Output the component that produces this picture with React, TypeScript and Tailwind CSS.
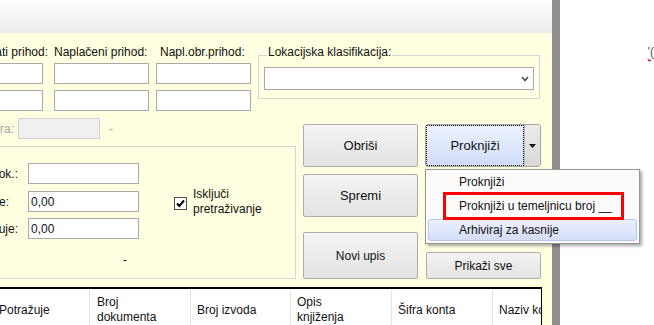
import React from "react"

const btn =
    "flex items-center justify-center border border-[#adadad] rounded-[2px] bg-[linear-gradient(#f4f4f4,#e3e3e3)] text-[#111]"
const box = "h-[21px] border border-[#a9a9a9] bg-white"

function Chevron() {
    return (
        <svg width="8" height="6" viewBox="0 0 8 6">
            <polyline points="1,1 4,4.5 7,1" fill="none" stroke="#4a4a4a" strokeWidth="1.6" />
        </svg>
    )
}

export default function App() {
    return (
        <div className="relative flex w-[654px] h-[325px] overflow-hidden bg-white font-['Liberation_Sans',Arial,sans-serif] text-[12px] text-[#111]">
            {/* form */}
            <div className="w-[552px] flex flex-col">
                <div className="h-[33px] shrink-0 bg-[linear-gradient(#fdfdfd,#ececec)]" />
                <div className="flex-1 min-h-0 overflow-hidden flex flex-col bg-[#ffffe1] pt-[12px]">
                    {/* top fields */}
                    <div className="flex items-start shrink-0">
                        <div className="w-[43px] flex flex-col">
                            <div className="w-[48px] h-[14px] leading-[14px] mb-[4px] flex justify-end whitespace-nowrap">
                                Obračunati prihod:
                            </div>
                            <div className={`${box} -ml-[10px]`} />
                            <div className={`${box} -ml-[10px] mt-[6px]`} />
                        </div>
                        <div className="w-[95px] ml-[11px] flex flex-col">
                            <div className="h-[14px] leading-[14px] mb-[4px] whitespace-nowrap">Naplačeni prihod:</div>
                            <div className={box} />
                            <div className={`${box} mt-[6px]`} />
                        </div>
                        <div className="w-[95px] ml-[7px] flex flex-col">
                            <div className="h-[14px] leading-[14px] mb-[4px] pl-[4px] whitespace-nowrap">Napl.obr.prihod:</div>
                            <div className={box} />
                            <div className={`${box} mt-[6px]`} />
                        </div>
                        <div className="relative w-[282px] ml-[7px] mt-[10px] border border-[#d6d6d6] px-[5px] pt-[11px] pb-[8px]">
                            <span className="absolute left-[8px] -top-[11px] h-[14px] leading-[14px] px-[1px] bg-[#ffffe1] whitespace-nowrap">
                                Lokacijska klasifikacija:
                            </span>
                            <div className="h-[23px] border border-[#a9a9a9] bg-white flex items-center justify-end pr-[4px]">
                                <Chevron />
                            </div>
                        </div>
                    </div>

                    {/* lower section */}
                    <div className="flex items-start shrink-0">
                        <div className="w-[296px] flex flex-col">
                            <div className="mt-[7px] h-[21px] flex items-center">
                                <div className="w-[18px] flex justify-end pr-[4px] whitespace-nowrap text-[#a3a3a3]">Šifra:</div>
                                <div className="w-[82px] h-[21px] border border-[#d2d2d2] bg-[#f0f0f0]" />
                                <span className="ml-[9px] text-[#a3a3a3]">-</span>
                            </div>
                            <div className="mt-[7px] h-[133px] flex border-t border-r border-b border-[#d6d6d6]">
                                <div className="flex flex-col pt-[16px]">
                                    <div className="flex items-center">
                                        <div className="w-[28px] flex justify-end pr-[10px] whitespace-nowrap">Broj dok.:</div>
                                        <div className={`${box} w-[111px]`} />
                                    </div>
                                    <div className="flex items-center mt-[7px]">
                                        <div className="w-[28px] flex justify-end pr-[19px] whitespace-nowrap">Duguje:</div>
                                        <div className={`${box} w-[111px] flex items-center pl-[2px]`}>0,00</div>
                                    </div>
                                    <div className="flex items-center mt-[6px]">
                                        <div className="w-[28px] flex justify-end pr-[10px] whitespace-nowrap">Potražuje:</div>
                                        <div className={`${box} w-[111px] flex items-center pl-[2px]`}>0,00</div>
                                    </div>
                                    <div className="mt-[14px] pl-[123px] leading-[14px]">-</div>
                                </div>
                                <div className="ml-[35px] mt-[40px] flex items-start">
                                    <div className="mt-[10px] w-[13px] h-[13px] border border-[#4d4d4d] bg-white flex items-center justify-center">
                                        <svg width="11" height="11" viewBox="0 0 11 11">
                                            <path d="M2 5.5 L4.3 8 L9 2.5" fill="none" stroke="#000" strokeWidth="2" />
                                        </svg>
                                    </div>
                                    <div className="ml-[6px] leading-[15px]">
                                        Isključi
                                        <br />
                                        pretraživanje
                                    </div>
                                </div>
                            </div>
                        </div>

                        <div className="w-[115px] ml-[7px] mt-[13px] flex flex-col">
                            <div className={`${btn} h-[43px] text-[13px]`}>Obriši</div>
                            <div className={`${btn} h-[43px] mt-[7px] text-[13px]`}>Spremi</div>
                            <div className={`${btn} h-[47px] mt-[15px]`}>Novi upis</div>
                        </div>

                        <div className="w-[116px] ml-[7px] mt-[13px] flex flex-col">
                            <div className="flex h-[43px] border border-[#a3a3a3] rounded-[3px] overflow-hidden">
                                <div className="w-[98px] flex items-center justify-center border border-dotted border-black bg-[linear-gradient(#ecf2fd,#d1ddf8)] text-[13px]">
                                    Proknjiži
                                </div>
                                <div className="flex-1 flex items-center justify-center border-l border-[#b8b8b8] bg-[linear-gradient(#ececec,#d8d8d8)]">
                                    <svg width="7" height="4" viewBox="0 0 7 4">
                                        <polygon points="0,0 7,0 3.5,4" fill="#111" />
                                    </svg>
                                </div>
                            </div>
                            <div className={`${btn} ml-[1px] w-[115px] h-[27px] mt-[85px]`}>Prikaži sve</div>
                        </div>
                    </div>

                    {/* grid header */}
                    <div className="mt-[8px] shrink-0 h-[60px] w-[542px] border-t-2 border-r border-black bg-white overflow-hidden">
                        <div className="flex h-[42px] leading-[15px]">
                            <div className="w-[90px] flex items-center border-r border-[#e4e4e4] -indent-[1px] whitespace-nowrap">Potražuje</div>
                            <div className="w-[101px] flex items-center pl-[7px] border-r border-[#e4e4e4]">
                                Broj
                                <br />
                                dokumenta
                            </div>
                            <div className="w-[100px] flex items-center pl-[6px] border-r border-[#e4e4e4]">Broj izvoda</div>
                            <div className="w-[101px] flex items-center pl-[6px] border-r border-[#e4e4e4]">
                                Opis
                                <br />
                                knjiženja
                            </div>
                            <div className="w-[101px] flex items-center pl-[6px] border-r border-[#e4e4e4]">Šifra konta</div>
                            <div className="flex-1 flex items-center pl-[6px] whitespace-nowrap overflow-hidden">Naziv konta</div>
                        </div>
                    </div>
                </div>
            </div>

            <div className="w-[8px] shrink-0 bg-[#8f8f8f]" />

            <div className="flex-1 pt-[43px] pl-[88px]">
                <span className="leading-[14px] text-[#555] whitespace-nowrap underline decoration-wavy decoration-[#e00]">'(</span>
            </div>

            {/* dropdown menu */}
            <div className="absolute left-[425px] top-[169px] w-[215px] h-[75px] flex flex-col gap-[2px] px-[2px] pt-[1px] bg-[#fbfbfb] border border-[#979797] shadow-[2px_2px_3px_rgba(0,0,0,0.35)]">
                <div className="h-[22px] flex items-center pl-[31px] whitespace-nowrap">Proknjiži</div>
                <div className="h-[22px] flex items-center pl-[31px] whitespace-nowrap">Proknjiži u temeljnicu broj __</div>
                <div className="h-[22px] flex items-center pl-[30px] whitespace-nowrap border border-[#b5c7ec] rounded-[3px] bg-[linear-gradient(#ebf0fc,#d3ddf5)]">
                    Arhiviraj za kasnije
                </div>
            </div>

            {/* highlight annotation */}
            <div className="absolute left-[443px] top-[192px] w-[181px] h-[28px] border-[3px] border-[#ff0000]" />
        </div>
    )
}
